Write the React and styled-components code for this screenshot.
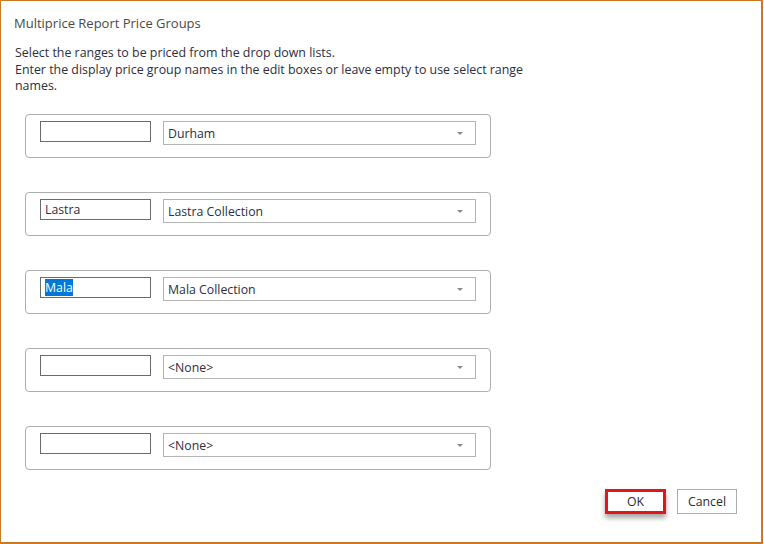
import React from 'react'
import styled, { createGlobalStyle } from 'styled-components'

const GlobalStyle = createGlobalStyle`
  html, body {
    margin: 0;
    padding: 0;
    background: #ffffff;
  }
  body {
    font-family: "Open Sans", "Noto Sans", sans-serif;
  }
`

const Window = styled.div`
  box-sizing: border-box;
  width: 763px;
  height: 544px;
  border-top: 1px solid #c97a1f;
  border-left: 1px solid #c97a1f;
  border-right: 2px solid #c97a1f;
  border-bottom: 2px solid #c97a1f;
  background: #ffffff;
  display: flex;
  flex-direction: column;
`

const Title = styled.div`
  margin: 13px 0 0 13px;
  font-size: 13px;
  line-height: 18px;
  color: #4a4a4a;
`

const Description = styled.div`
  margin: 13px 0 0 14px;
  font-size: 12.4px;
  line-height: 16.5px;
  color: #2e2e40;
`

const GroupList = styled.div`
  margin: 19px 0 0 24px;
  width: 466px;
  display: flex;
  flex-direction: column;
  gap: 34px;
`

const Group = styled.div`
  box-sizing: border-box;
  height: 44px;
  border: 1px solid #aeaeae;
  border-radius: 4px;
  padding: 6px 0 0 14px;
  display: flex;
  align-items: flex-start;
  gap: 12px;
`

const NameBox = styled.div`
  box-sizing: border-box;
  width: 111px;
  height: 21px;
  border: 1px solid #6b6b6b;
  padding: 1px 4px 0;
  font-size: 12.3px;
  line-height: 18px;
  color: #2e2e40;
  white-space: nowrap;
`

const Selected = styled.span`
  background: #0078d7;
  color: #ffffff;
`

const Select = styled.div`
  box-sizing: border-box;
  width: 313px;
  height: 24px;
  border: 1px solid #b4b4b4;
  padding: 2px 4px 0;
  display: flex;
  align-items: center;
  justify-content: space-between;
  font-size: 12.3px;
  color: #2e2e40;
`

const Arrow = styled.span`
  width: 0;
  height: 0;
  margin-right: 8px;
  border-left: 3px solid transparent;
  border-right: 3px solid transparent;
  border-top: 3px solid #8a8a8a;
`

const Footer = styled.div`
  margin-top: auto;
  padding: 0 24px 28px 0;
  display: flex;
  justify-content: flex-end;
  gap: 11px;
`

const Button = styled.div`
  box-sizing: border-box;
  width: ${({ $primary }) => ($primary ? '61px' : '60px')};
  height: 25px;
  border: ${({ $primary }) => ($primary ? '3px solid #e4141b' : '1px solid #adadad')};
  box-shadow: ${({ $primary }) => ($primary ? '0 4px 5px rgba(0, 0, 0, 0.35)' : 'none')};
  display: flex;
  align-items: center;
  justify-content: center;
  font-size: 12.3px;
  color: #2b2b2b;
  background: #ffffff;
`

const rows = [
  { name: '', range: 'Durham' },
  { name: 'Lastra', range: 'Lastra Collection' },
  { name: 'Mala', range: 'Mala Collection', selected: true },
  { name: '', range: '<None>' },
  { name: '', range: '<None>' },
]

export default function App() {
  return (
    <>
      <GlobalStyle />
      <Window>
        <Title>Multiprice Report Price Groups</Title>
        <Description>
          Select the ranges to be priced from the drop down lists.
          <br />
          Enter the display price group names in the edit boxes or leave empty to use select range
          <br />
          names.
        </Description>
        <GroupList>
          {rows.map((row, i) => (
            <Group key={i}>
              <NameBox>{row.selected ? <Selected>{row.name}</Selected> : row.name}</NameBox>
              <Select>
                <span>{row.range}</span>
                <Arrow />
              </Select>
            </Group>
          ))}
        </GroupList>
        <Footer>
          <Button $primary>OK</Button>
          <Button>Cancel</Button>
        </Footer>
      </Window>
    </>
  )
}
